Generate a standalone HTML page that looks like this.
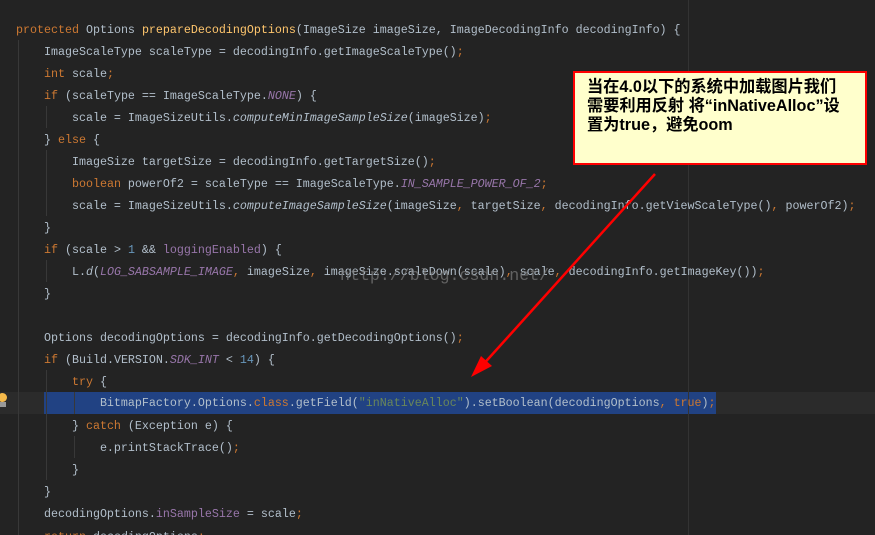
<!DOCTYPE html>
<html><head><meta charset="utf-8"><style>
html,body{margin:0;padding:0;width:875px;height:535px;overflow:hidden}
body{background:#232323;position:relative;font-family:"Liberation Mono","Noto Sans CJK SC",monospace;font-size:11.67px;color:#b2bfcb}
.l{position:absolute;left:16px;white-space:pre;line-height:22px;height:22px}
.k{color:#cc7832}.f{color:#ffc66d}.i{color:#9876aa;font-style:italic}.m{font-style:italic}.p{color:#9876aa}.n{color:#6897bb}.s{color:#6a8759}
.g{position:absolute;width:1px;background:#383838}
</style></head><body>
<div style="position:absolute;left:0;top:392px;width:875px;height:22px;background:#2b2b2b"></div>
<div style="position:absolute;left:44px;top:392px;width:672px;height:22px;background:#214283"></div>
<div class="g" style="left:688px;top:0;height:535px;background:#333"></div>
<div class="g" style="left:18px;top:40px;height:495px"></div>
<div class="g" style="left:46px;top:106px;height:22px"></div>
<div class="g" style="left:46px;top:150px;height:66px"></div>
<div class="g" style="left:46px;top:260px;height:22px"></div>
<div class="g" style="left:46px;top:370px;height:110px"></div>
<div class="g" style="left:74px;top:392px;height:22px"></div>
<div class="g" style="left:74px;top:436px;height:22px"></div>
<div style="position:absolute;left:-2px;top:393px;width:9px;height:9px;border-radius:50%;background:#f5b94a"></div>
<div style="position:absolute;left:0px;top:402px;width:6px;height:5px;background:#999"></div>

<div style="position:absolute;left:0;top:1px;width:875px;height:534px;overflow:hidden">
<div class="l" style="top:18px"><span class="k">protected</span> Options <span class="f">prepareDecodingOptions</span>(ImageSize imageSize, ImageDecodingInfo decodingInfo) {</div>
<div class="l" style="top:40px">    ImageScaleType scaleType = decodingInfo.getImageScaleType()<span class="k">;</span></div>
<div class="l" style="top:62px">    <span class="k">int</span> scale<span class="k">;</span></div>
<div class="l" style="top:84px">    <span class="k">if</span> (scaleType == ImageScaleType.<span class="i">NONE</span>) {</div>
<div class="l" style="top:106px">        scale = ImageSizeUtils.<span class="m">computeMinImageSampleSize</span>(imageSize)<span class="k">;</span></div>
<div class="l" style="top:128px">    } <span class="k">else</span> {</div>
<div class="l" style="top:150px">        ImageSize targetSize = decodingInfo.getTargetSize()<span class="k">;</span></div>
<div class="l" style="top:172px">        <span class="k">boolean</span> powerOf2 = scaleType == ImageScaleType.<span class="i">IN_SAMPLE_POWER_OF_2</span><span class="k">;</span></div>
<div class="l" style="top:194px">        scale = ImageSizeUtils.<span class="m">computeImageSampleSize</span>(imageSize<span class="k">,</span> targetSize<span class="k">,</span> decodingInfo.getViewScaleType()<span class="k">,</span> powerOf2)<span class="k">;</span></div>
<div class="l" style="top:216px">    }</div>
<div class="l" style="top:238px">    <span class="k">if</span> (scale &gt; <span class="n">1</span> &amp;&amp; <span class="p">loggingEnabled</span>) {</div>
<div class="l" style="top:260px">        L.<span class="m">d</span>(<span class="i">LOG_SABSAMPLE_IMAGE</span><span class="k">,</span> imageSize<span class="k">,</span> imageSize.scaleDown(scale)<span class="k">,</span> scale<span class="k">,</span> decodingInfo.getImageKey())<span class="k">;</span></div>
<div class="l" style="top:282px">    }</div>
<div class="l" style="top:326px">    Options decodingOptions = decodingInfo.getDecodingOptions()<span class="k">;</span></div>
<div class="l" style="top:348px">    <span class="k">if</span> (Build.VERSION.<span class="i">SDK_INT</span> &lt; <span class="n">14</span>) {</div>
<div class="l" style="top:370px">        <span class="k">try</span> {</div>
<div class="l" style="top:391px">            BitmapFactory.Options.<span class="k">class</span>.getField(<span class="s">"inNativeAlloc"</span>).setBoolean(decodingOptions<span class="k">,</span> <span class="k">true</span>)<span class="k">;</span></div>
<div class="l" style="top:414px">        } <span class="k">catch</span> (Exception e) {</div>
<div class="l" style="top:436px">            e.printStackTrace()<span class="k">;</span></div>
<div class="l" style="top:458px">        }</div>
<div class="l" style="top:480px">    }</div>
<div class="l" style="top:502px">    decodingOptions.<span class="p">inSampleSize</span> = scale<span class="k">;</span></div>
<div class="l" style="top:525px">    <span class="k">return</span> decodingOptions<span class="k">;</span></div>
</div>

<div style="position:absolute;left:340px;top:266px;font-family:'Liberation Mono',monospace;font-size:16.6px;color:rgba(125,125,125,0.7);white-space:pre">http://blog.csdn.net/</div>

<div style="position:absolute;left:573px;top:71px;background:#ffffcc;border:2px solid #ff0000;font-family:'Liberation Sans','Noto Sans CJK SC',sans-serif;font-weight:bold;font-size:16.2px;line-height:19px;color:#000;padding:5px 0 0 12px;box-sizing:border-box;width:294px;height:94px;white-space:nowrap;overflow:hidden">当在4.0以下的系统中加载图片我们<br>需要利用反射 将“inNativeAlloc”设<br>置为true，避免oom</div>

<svg style="position:absolute;left:0;top:0" width="875" height="535">
<line x1="655" y1="174" x2="480" y2="368" stroke="#ff0000" stroke-width="2.5"/>
<polygon points="471,377 481,356 492,366" fill="#ff0000"/>
</svg>
</body></html>
